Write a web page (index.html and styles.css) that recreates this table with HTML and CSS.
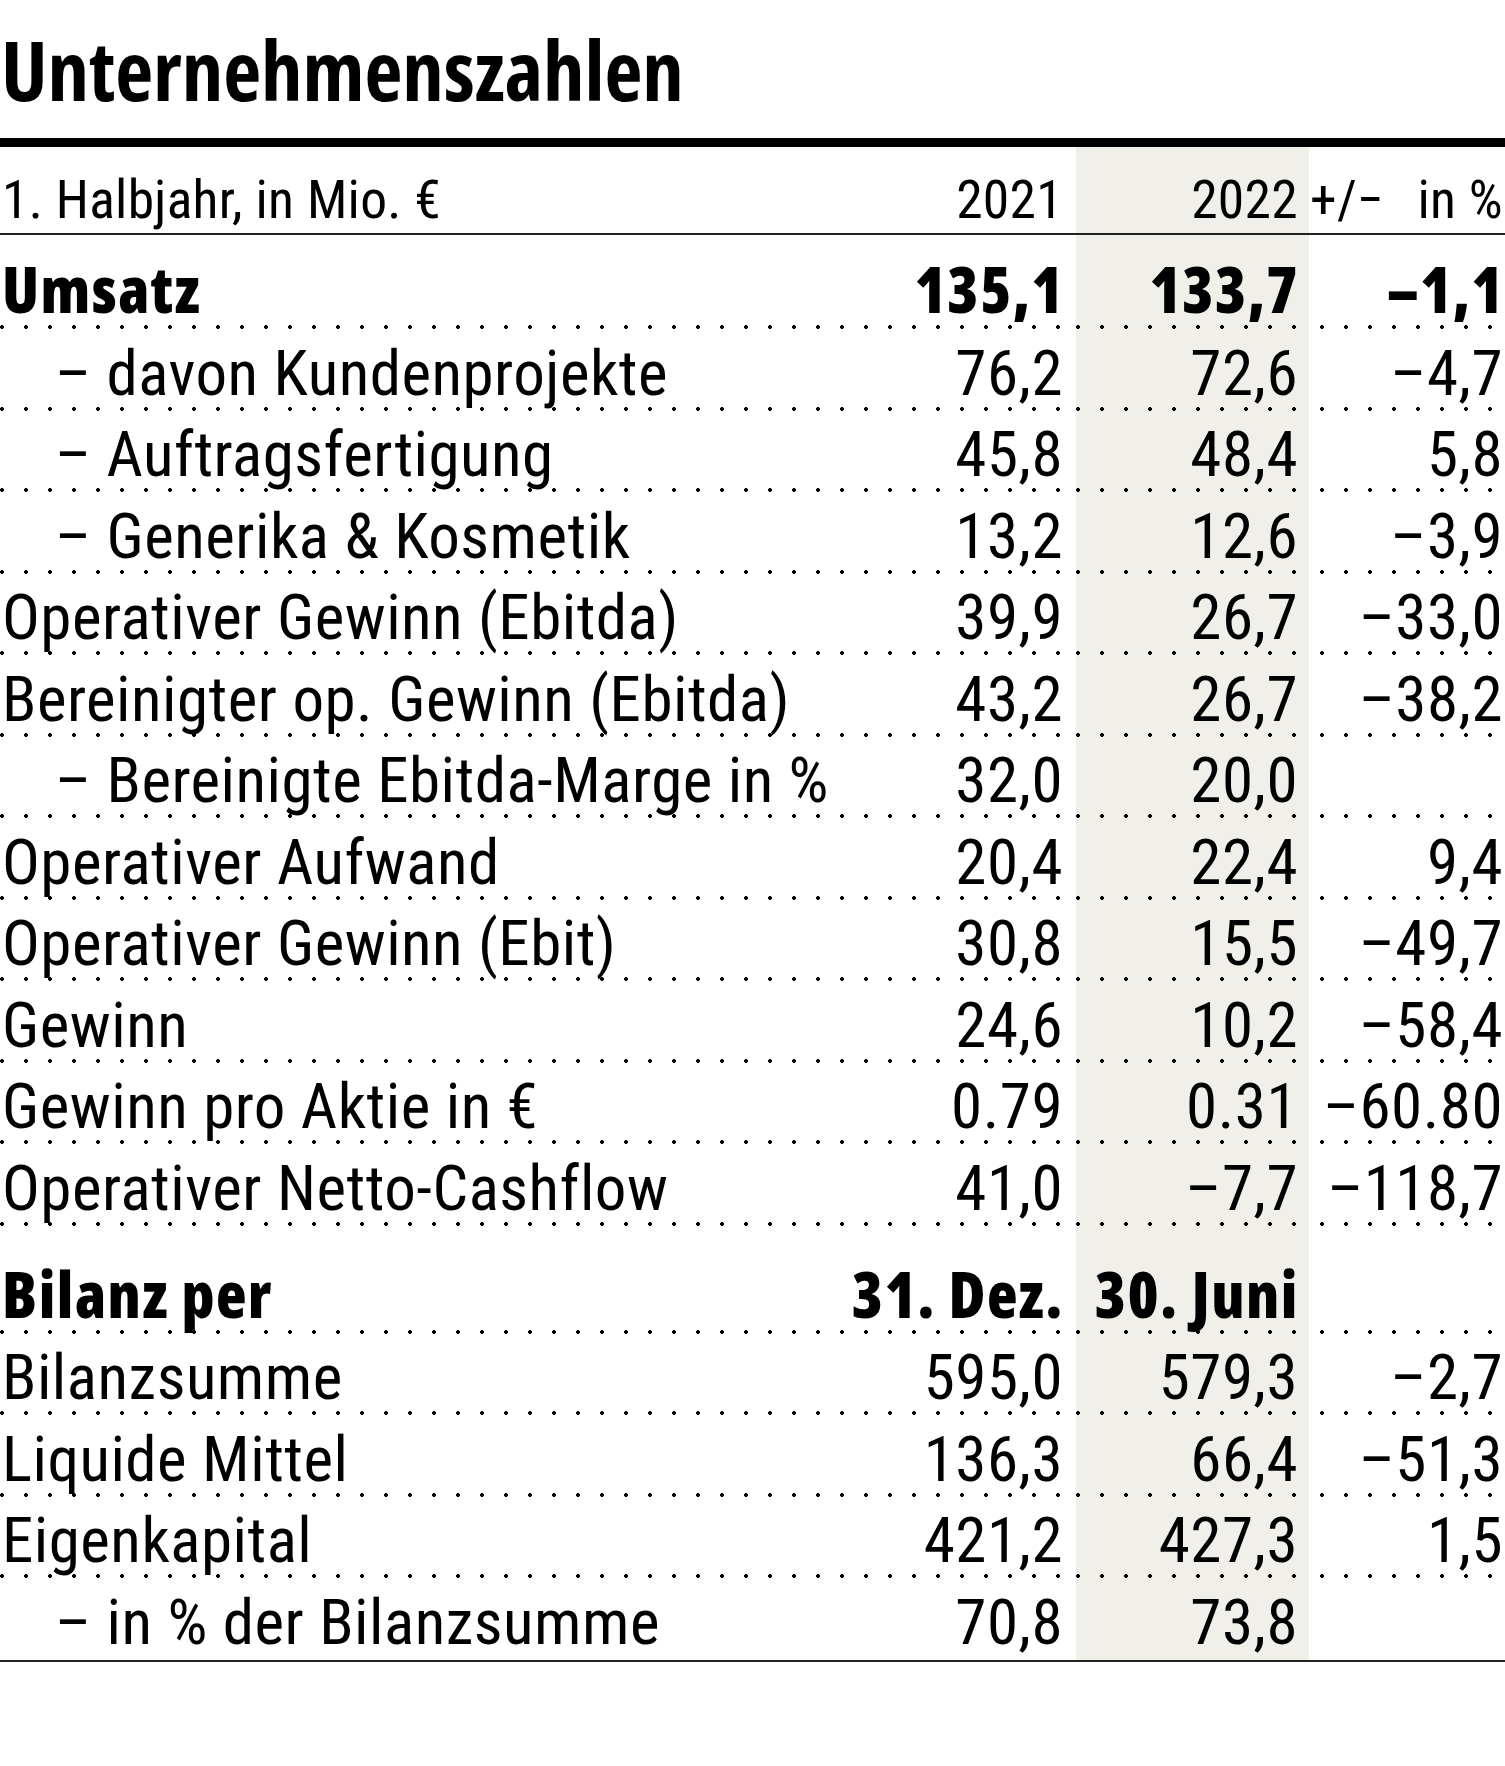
FILE: index.html
```html
<!DOCTYPE html>
<html lang="de">
<head>
<meta charset="utf-8">
<title>Unternehmenszahlen</title>
<link rel="stylesheet" href="styles.css">
</head>
<body>
<div class="page">
  <h1 class="title">Unternehmenszahlen</h1>
  <div class="table">
    <div class="row head">
      <div class="lbl">1. Halbjahr, in Mio. €</div>
      <div class="num">2021</div>
      <div class="num shade">2022</div>
      <div class="pct split"><span>+/−</span><span>in %</span></div>
    </div>

    <div class="row first bold">
      <div class="lbl">Umsatz</div>
      <div class="num">135,1</div>
      <div class="num shade">133,7</div>
      <div class="pct">–1,1</div>
    </div>
    <div class="row">
      <div class="lbl sub">– davon Kundenprojekte</div>
      <div class="num">76,2</div>
      <div class="num shade">72,6</div>
      <div class="pct">–4,7</div>
    </div>
    <div class="row">
      <div class="lbl sub">– Auftragsfertigung</div>
      <div class="num">45,8</div>
      <div class="num shade">48,4</div>
      <div class="pct">5,8</div>
    </div>
    <div class="row">
      <div class="lbl sub">– Generika &amp; Kosmetik</div>
      <div class="num">13,2</div>
      <div class="num shade">12,6</div>
      <div class="pct">–3,9</div>
    </div>
    <div class="row">
      <div class="lbl">Operativer Gewinn (Ebitda)</div>
      <div class="num">39,9</div>
      <div class="num shade">26,7</div>
      <div class="pct">–33,0</div>
    </div>
    <div class="row">
      <div class="lbl">Bereinigter op. Gewinn (Ebitda)</div>
      <div class="num">43,2</div>
      <div class="num shade">26,7</div>
      <div class="pct">–38,2</div>
    </div>
    <div class="row">
      <div class="lbl sub">– Bereinigte Ebitda-Marge in %</div>
      <div class="num">32,0</div>
      <div class="num shade">20,0</div>
      <div class="pct"></div>
    </div>
    <div class="row">
      <div class="lbl">Operativer Aufwand</div>
      <div class="num">20,4</div>
      <div class="num shade">22,4</div>
      <div class="pct">9,4</div>
    </div>
    <div class="row">
      <div class="lbl">Operativer Gewinn (Ebit)</div>
      <div class="num">30,8</div>
      <div class="num shade">15,5</div>
      <div class="pct">–49,7</div>
    </div>
    <div class="row">
      <div class="lbl">Gewinn</div>
      <div class="num">24,6</div>
      <div class="num shade">10,2</div>
      <div class="pct">–58,4</div>
    </div>
    <div class="row">
      <div class="lbl">Gewinn pro Aktie in €</div>
      <div class="num">0.79</div>
      <div class="num shade">0.31</div>
      <div class="pct">–60.80</div>
    </div>
    <div class="row">
      <div class="lbl">Operativer Netto-Cashflow</div>
      <div class="num">41,0</div>
      <div class="num shade">–7,7</div>
      <div class="pct">–118,7</div>
    </div>

    <div class="row section bold">
      <div class="lbl">Bilanz per</div>
      <div class="num">31. Dez.</div>
      <div class="num shade">30. Juni</div>
      <div class="pct"></div>
    </div>
    <div class="row">
      <div class="lbl">Bilanzsumme</div>
      <div class="num">595,0</div>
      <div class="num shade">579,3</div>
      <div class="pct">–2,7</div>
    </div>
    <div class="row">
      <div class="lbl">Liquide Mittel</div>
      <div class="num">136,3</div>
      <div class="num shade">66,4</div>
      <div class="pct">–51,3</div>
    </div>
    <div class="row">
      <div class="lbl">Eigenkapital</div>
      <div class="num">421,2</div>
      <div class="num shade">427,3</div>
      <div class="pct">1,5</div>
    </div>
    <div class="row last">
      <div class="lbl sub">– in % der Bilanzsumme</div>
      <div class="num">70,8</div>
      <div class="num shade">73,8</div>
      <div class="pct"></div>
    </div>
  </div>
</div>
</body>
</html>
```
FILE: styles.css
```css
html, body {
  margin: 0;
  padding: 0;
  background: #ffffff;
}

.page {
  width: 1505px;
  color: #000;
  font-family: Roboto, "Liberation Sans", sans-serif;
  font-stretch: 75%;
}

.title {
  margin: 0;
  padding: 19px 0 19px 1px;
  height: 100px;
  line-height: 100px;
  font-family: "Open Sans", "Liberation Sans", sans-serif;
  font-stretch: 75%;
  font-weight: 740;
  font-size: 83px;
  letter-spacing: -0.1px;
  white-space: nowrap;
}

.table {
  border-top: 9px solid #000;
  border-bottom: 2px solid #222;
}

.row {
  display: grid;
  grid-template-columns: minmax(0, 1fr) 236px 233px 196px;
  font-size: 63px;
  letter-spacing: 0.5px;
  white-space: nowrap;
  background-image: radial-gradient(circle at 2px 2px, #000 0 1.7px, transparent 2.2px);
  background-size: 24px 4px;
  background-repeat: repeat-x;
  background-position: 0 100%;
}

.row > div {
  height: 66px;
  line-height: 66px;
  padding-top: 11.5px;
  padding-bottom: 4px;
}

.row.bold {
  font-family: "Open Sans", "Liberation Sans", sans-serif;
  font-stretch: 75%;
  font-weight: 800;
  letter-spacing: 1.5px;
}

.row.first > div {
  padding-top: 20.5px;
  padding-bottom: 7.5px;
}

.row.section > div {
  padding-top: 35.5px;
  padding-bottom: 6.5px;
}

.row.last > div {
  padding-top: 12px;
  padding-bottom: 4px;
}

.row.last {
  background-image: none;
}

.row.head {
  font-size: 53.5px;
  letter-spacing: 0.3px;
  background-image: none;
  border-bottom: 2px solid #222;
}

.row.head > div {
  height: 62px;
  line-height: 62px;
  padding-top: 22px;
  padding-bottom: 2px;
}

.lbl {
  padding-left: 2px;
  text-align: left;
}

.lbl.sub {
  padding-left: 55px;
}

.num {
  text-align: right;
  padding-right: 13px;
}

.row.bold .num {
  padding-right: 12px;
}

.num.shade {
  padding-right: 11px;
  background-color: #f0efe9;
  background-image: radial-gradient(circle at 2px 2px, #000 0 1.7px, transparent 2.2px);
  background-size: 24px 4px;
  background-repeat: repeat-x;
  background-position: 0 100%;
}

.row.bold .num.shade {
  padding-right: 10px;
}

.row.head .num.shade,
.row.last .num.shade {
  background-image: none;
}

.pct {
  text-align: right;
  padding-right: 2px;
}

.row.bold .pct {
  padding-right: 1px;
}

.pct.split {
  display: flex;
  justify-content: space-between;
  padding-left: 1px;
}
```
